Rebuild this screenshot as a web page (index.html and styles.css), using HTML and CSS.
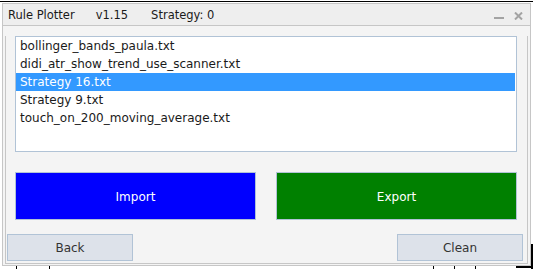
FILE: index.html
```html
<!DOCTYPE html>
<html lang="en">
<head>
    <meta charset="UTF-8">
    <title>Rule Plotter</title>
    <link rel="stylesheet" href="styles.css">
</head>
<body>
    <div class="chart-line"></div>
    <div class="window">
        <div class="title-bar">
            <span class="title-name">Rule Plotter</span>
            <span class="title-version">v1.15</span>
            <span class="title-strategy">Strategy: 0</span>
            <span class="title-min"></span>
            <svg class="title-close" width="9" height="8" viewBox="0 0 9 8">
                <path d="M1 0.5 L8 7.5 M8 0.5 L1 7.5" stroke="#a3a3a3" stroke-width="2"></path>
            </svg>
        </div>
        <div class="panel">
            <div class="file-list">
                <div class="file-item">bollinger_bands_paula.txt</div>
                <div class="file-item">didi_atr_show_trend_use_scanner.txt</div>
                <div class="file-item selected">Strategy 16.txt</div>
                <div class="file-item">Strategy 9.txt</div>
                <div class="file-item">touch_on_200_moving_average.txt</div>
            </div>
            <div class="action-row">
                <button class="action-button import">Import</button>
                <button class="action-button export">Export</button>
            </div>
            <div class="nav-row">
                <button class="nav-button">Back</button>
                <button class="nav-button">Clean</button>
            </div>
        </div>
    </div>

    <!-- bits of the chart showing under the panel -->
    <div class="tick" style="left: 16px"></div>
    <div class="tick" style="left: 49px"></div>
    <div class="tick" style="left: 433px"></div>
    <div class="tick" style="left: 454px"></div>
    <div class="tick" style="left: 475px"></div>
    <div class="corner-v"></div>
    <div class="corner-h"></div>
</body>
</html>
```

FILE: styles.css
```css
* {
    margin: 0;
    padding: 0;
    box-sizing: border-box;
}

html, body {
    width: 533px;
    height: 269px;
    overflow: hidden;
    background-color: #fff;
    font-family: 'DejaVu Sans', Verdana, sans-serif;
}

body {
    position: relative;
}

.chart-line {
    height: 1px;
    margin-top: 1px;
    background-color: #000;
}

.window {
    margin-top: 1px;
    margin-left: 2px;
    width: 529px;
    border: 1px solid #c6c6c6;
    background-color: #f4f4f4;
    padding-bottom: 1px;
}

.title-bar {
    display: flex;
    align-items: flex-start;
    height: 22px;
    padding: 5px 7px 0 5px;
    background-color: #eeeeee;
    border-bottom: 1px solid #c6c6c6;
    font-size: 11.5px;
    line-height: 13px;
    color: #1a1a1a;
}

.title-version {
    margin-left: 21px;
}

.title-strategy {
    margin-left: 23px;
}

.title-min {
    margin-left: auto;
    margin-top: 8px;
    width: 10px;
    height: 2px;
    background-color: #a3a3a3;
}

.title-close {
    margin-left: 10px;
    margin-top: 3px;
}

.panel {
    margin: 0 2px;
    border: 1px solid #c6c6c6;
    border-top: none;
    padding-bottom: 2px;
}

.file-list {
    margin: 10px 0 0 9px;
    width: 502px;
    height: 116px;
    border: 1px solid #b1c3d6;
    background-color: #fff;
}

.file-item {
    height: 18px;
    line-height: 18px;
    padding-left: 4px;
    font-size: 12px;
    color: #1a1a1a;
    white-space: nowrap;
}

.file-item.selected {
    background-color: #3399ff;
    color: #fff;
    margin-right: 1px;
}

.action-row {
    display: flex;
    gap: 20px;
    margin: 20px 0 0 9px;
    width: 502px;
}

.action-button {
    flex: 1;
    height: 48px;
    padding-top: 2px;
    border: 1px solid #b1c3d6;
    color: #fff;
    font-family: inherit;
    font-size: 12px;
}

.action-button.import {
    background-color: #0000ff;
}

.action-button.export {
    background-color: #008000;
}

.nav-row {
    display: flex;
    justify-content: space-between;
    margin-top: 14px;
    padding: 0 4px 0 1px;
}

.nav-button {
    width: 126px;
    height: 27px;
    padding-top: 1px;
    border: 1px solid #b1c3d6;
    background-color: #dde2ea;
    color: #333;
    font-family: inherit;
    font-size: 12px;
}

.tick {
    position: absolute;
    top: 266px;
    width: 1px;
    height: 3px;
    background-color: #000;
}

.corner-v {
    position: absolute;
    left: 531px;
    top: 244px;
    width: 2px;
    height: 25px;
    background-color: #000;
}

.corner-h {
    position: absolute;
    left: 516px;
    top: 266px;
    width: 17px;
    height: 2px;
    background-color: #000;
}
```
